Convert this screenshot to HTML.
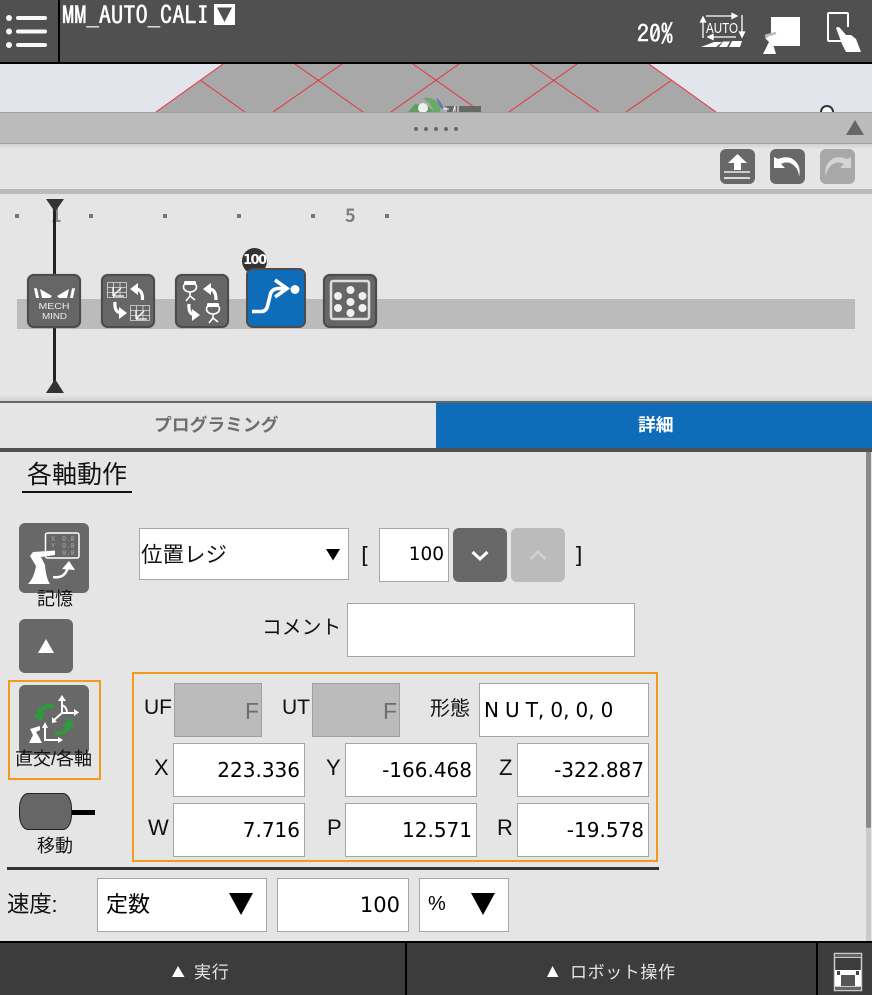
<!DOCTYPE html>
<html lang="ja"><head><meta charset="utf-8"><title>MM_AUTO_CALI</title>
<style>
html,body{margin:0;padding:0}
body{width:872px;height:995px;position:relative;overflow:hidden;background:#e5e5e5;font-family:"Liberation Sans","Noto Sans CJK JP",sans-serif;color:#111}
.a{position:absolute;box-sizing:border-box}
.t{position:absolute;white-space:nowrap;line-height:1}
.ipa{font-family:"IPAGothic","Noto Sans CJK JP",sans-serif;-webkit-text-stroke:.45px #fff}
.f{position:absolute;box-sizing:border-box;background:#fff;border:1px solid #a5a5a5;font-family:"DejaVu Sans","Noto Sans CJK JP",sans-serif;font-size:20px;text-align:right;padding-right:4px;height:54px;line-height:52px;color:#000}
.g{background:#bbb;border:1.5px solid #a0a0a0;color:#6e6e6e;font-family:"Liberation Sans",sans-serif;font-size:23px;padding-right:2px;line-height:54px}
.b{position:absolute;background:#686868;border-radius:6px}
.p{position:absolute;width:54px;height:54px;top:274px;background:#666;border:2px solid #4c4c4c;border-radius:7px;box-sizing:border-box;box-shadow:0 0 1px #777}
svg{position:absolute;left:0;top:0;overflow:visible}
</style></head><body>

<!-- header -->
<div class="a" style="left:0;top:0;width:872px;height:62px;background:#505050"></div>
<div class="a" style="left:0;top:62px;width:872px;height:2px;background:#000"></div>
<div class="a" style="left:58px;top:0;width:2px;height:62px;background:#000"></div>
<svg width="60" height="62"><g fill="#f8f8f8"><circle cx="9" cy="18" r="3"/><circle cx="9" cy="31.500" r="3"/><circle cx="9" cy="45" r="3"/><rect x="16" y="16" width="31" height="4" rx="2"/><rect x="16" y="29.500" width="31" height="4" rx="2"/><rect x="16" y="43" width="31" height="4" rx="2"/></g></svg>
<div class="t ipa" style="left:62px;top:3px;font-size:24.500px;color:#fff">MM_AUTO_CALI</div>
<div class="a" style="left:214px;top:4px;width:21px;height:21px;background:#fff"></div>
<svg width="240" height="30"><path d="M217 7.500H232L224.500 22Z" fill="#505050"/></svg>
<div class="t ipa" style="left:637px;top:21px;font-size:24px;color:#fff">20%</div>

<svg width="872" height="62">
 <!-- AUTO -->
 <g stroke="#fff" stroke-width="1.300" fill="#fff">
  <path d="M703 19V38M700.500 22L703 17L705.500 22Z"/>
  <path d="M706 16H735M732 13.500L737 16L732 18.500Z"/>
  <path d="M742 15V34M739.500 32L742 37L744.500 32Z"/>
  <path d="M711 37H736M713 34.500L708 37L713 39.500Z"/>
 </g>
 <text x="706" y="33" fill="#fff" font-family="Liberation Sans" font-size="15" textLength="32" lengthAdjust="spacingAndGlyphs">AUTO</text>
 <path d="M701 47L714 42H722L716 47ZM719 47L723 41.500H730L727 47ZM729 47L732 41H742L740 47Z" fill="#fff"/>
 <!-- robot+square -->
 <rect x="771" y="17" width="29" height="29" fill="#fff"/>
 <path d="M763 54L767 46L769 42L765 38L774 34L777 37L771 39L773 44L776 54Z" fill="#fff"/>
 <path d="M765 36L776 33" stroke="#bbb" stroke-width="2.500"/>
 <!-- tablet hand -->
 <path d="M848 41H829Q828 41 828 40V14Q828 13 829 13H847Q848 13 848 14V27" fill="none" stroke="#fff" stroke-width="2"/>
 <path d="M836 28Q838 26 840 28L846 35L851 35L856 39L861 52L846 52L842 44Z" fill="#fff"/>
</svg>

<!-- 3D view -->
<svg width="872" height="112" style="top:0">
 <rect x="0" y="64" width="872" height="48" fill="#e2e6ec"/>
 <path d="M223 64H649L716 112H156Z" fill="#a8a8a8"/>
 <g stroke="#e8303a" stroke-width="1" fill="none">
  <path d="M223 64L156 112M200 80L245 112M295 64L363 112M342 64L273 112M413 64L481 112M459 64L391 112M530 64L599 112M577 64L509 112M649 64L716 112M672 80L626 112"/>
 </g>
 <rect x="445" y="106" width="36" height="6" fill="#686868"/>
 <path d="M408 112L415 104L428 106L434 112Z" fill="#5e9e62"/>
 <path d="M423 98Q434 96 441 106L440 112H434L430 104Z" fill="#6aa86c"/>
 <path d="M436 98Q441 100 444 110L441 108Z" fill="#6a70c0"/>
 <circle cx="423" cy="108" r="5" fill="#f0f0f0"/>
 <path d="M446 112V107M443 109H449M453 112L455 106V112M458 106V112" stroke="#fff" stroke-width="1"/>
 <path d="M821 112A6 6 0 1 1 833 112" fill="#fff" stroke="#333" stroke-width="2"/>
</svg>

<!-- bar -->
<div class="a" style="left:0;top:112px;width:872px;height:32px;background:#bbb;border-top:1px solid #a2a2a2;border-bottom:1px solid #a2a2a2"></div>
<div class="a" style="left:0;top:144px;width:872px;height:5px;background:linear-gradient(#d2d2d2,#e5e5e5)"></div>
<svg width="872" height="145"><g fill="#666"><circle cx="416" cy="129" r="2"/><circle cx="426" cy="129" r="2"/><circle cx="436" cy="129" r="2"/><circle cx="446" cy="129" r="2"/><circle cx="456" cy="129" r="2"/><path d="M846 135L855 120L864 135Z"/></g></svg>

<!-- toolbar buttons -->
<div class="b" style="left:720px;top:149px;width:35px;height:35px"></div>
<div class="b" style="left:770px;top:149px;width:35px;height:35px"></div>
<div class="b" style="left:820px;top:149px;width:35px;height:35px;background:#a8a8a8"></div>
<svg width="872" height="190">
 <path d="M737.500 154L747 163H741V170H734V163H728Z" fill="#fff"/>
 <path d="M724 172H750" stroke="#ccc" stroke-width="2"/><path d="M724 178H750" stroke="#fff" stroke-width="1.500"/>
 <path d="M774 158V169H785L781 165Q790 160 797 170Q799 174 799 178Q802 165 791 159Q785 157 778 160Z" fill="#fff" transform="translate(0,-1)"/>
 <path d="M851 158V169H840L844 165Q835 160 828 170Q826 174 826 178Q823 165 834 159Q840 157 847 160Z" fill="#d4d4d4" transform="translate(0,-1)"/>
</svg>
<div class="a" style="left:0;top:189px;width:872px;height:5px;background:#bbb"></div>

<!-- timeline -->
<div class="a" style="left:17px;top:299px;width:838px;height:30px;background:#bbb"></div>
<div class="t" style="left:51px;top:206px;font-size:18px;font-weight:bold;font-family:'Noto Sans CJK JP',sans-serif;color:#888">1</div>
<div class="t" style="left:345px;top:206px;font-size:18px;font-weight:bold;font-family:'Noto Sans CJK JP',sans-serif;color:#808080">5</div>
<svg width="872" height="400">
 <g fill="#777"><rect x="15" y="214" width="4" height="4"/><rect x="89" y="214" width="4" height="4"/><rect x="163" y="214" width="4" height="4"/><rect x="237" y="214" width="4" height="4"/><rect x="311" y="214" width="4" height="4"/><rect x="385" y="214" width="4" height="4"/></g>
 <rect x="53" y="205" width="3" height="180" fill="#222"/>
 <path d="M46 199H64L55 212Z" fill="#333"/>
 <path d="M46 393H64L55 379Z" fill="#333"/>
</svg>
<div class="p" style="left:27px"></div>
<div class="p" style="left:101px"></div>
<div class="p" style="left:175px"></div>
<div class="a" style="left:242px;top:248px;width:25px;height:26px;border-radius:50%;background:#333"></div>
<div class="t" style="left:243px;top:253px;font:bold 13px 'DejaVu Sans',sans-serif;color:#fff;letter-spacing:-1.500px">100</div>
<div class="a" style="left:246px;top:268px;width:60px;height:60px;background:#0f6cb8;border:2px solid #4c4c4c;border-radius:7px"></div>
<div class="p" style="left:323px"></div>
<svg width="872" height="400">
 <!-- mech mind -->
 <path d="M34 288L37 288.500L39 298L36 298ZM40 289L52 296L50 298H42ZM75 288L72 288.500L70 298L73 298ZM69 289L57 296L59 298H67Z" fill="#fff"/>
 <text x="38.500" y="309" fill="#eee" font-family="Liberation Sans" font-size="8.500" textLength="31" lengthAdjust="spacingAndGlyphs">MECH</text>
 <text x="42" y="319" fill="#eee" font-family="Liberation Sans" font-size="8.500" textLength="25" lengthAdjust="spacingAndGlyphs">MIND</text>
 <!-- frame swap -->
 <g fill="none" stroke="#ddd" stroke-width=".8"><path d="M107.500 282.500H126.500V297.500H107.500ZM107.500 287.500H126.500M107.500 292.500H126.500M113.500 282.500V297.500M120 282.500V297.500"/><path d="M130.500 305.500H149.500V320.500H130.500ZM130.500 310.500H149.500M130.500 315.500H149.500M136.500 305.500V320.500M143 305.500V320.500"/></g>
 <path d="M113 296L121 288M113 296H124M113 296V287M136 319L144 311M136 319H147M136 319V310" stroke="#fff" stroke-width="1.300" fill="none"/>
 <g fill="none" stroke="#fff" stroke-width="3.200"><path d="M135 289Q143 289 142.500 300"/><path d="M115 302Q114 313 122 313"/><path d="M209 289Q216 289 216 300"/><path d="M189 304Q188 315 196 315"/></g>
 <path d="M130 289L138 283V295ZM127 313L119 307V319ZM203 289L211 283V295ZM200 315L192 309V321Z" fill="#fff"/>
 <!-- robot swap -->
 <g fill="none" stroke="#fff" stroke-width="1.600">
  <ellipse cx="190" cy="287" rx="6.500" ry="5"/>
  <ellipse cx="213" cy="309" rx="6.500" ry="5"/>
  <path d="M190 292V296M190 296L186 301M190 296L195 300M213 314V318M213 318L209 323M213 318L218 322"/>
 </g>
 <rect x="184" y="281" width="12" height="4" rx="1.500" fill="#fff"/><rect x="207" y="303" width="12" height="4" rx="1.500" fill="#fff"/>
 <!-- blue -->
 <path d="M252 311.500H262Q267 311 268 304L270 296Q271 288.500 279 288.500H287" fill="none" stroke="#fff" stroke-width="3.600"/>
 <path d="M275 280L287 288.500L275 297" fill="none" stroke="#fff" stroke-width="3.600"/>
 <circle cx="295" cy="289.500" r="4.500" fill="#fff"/>
 <!-- grid -->
 <rect x="331" y="281" width="38" height="38" rx="2" fill="none" stroke="#ddd" stroke-width="2.500"/>
 <g fill="#f0f0f0"><circle cx="350.500" cy="290" r="4"/><circle cx="350.500" cy="302" r="4"/><circle cx="350.500" cy="313" r="4"/><circle cx="338" cy="296" r="4"/><circle cx="362.500" cy="296" r="4"/><circle cx="338" cy="308" r="4"/><circle cx="362.500" cy="308" r="4"/></g>
</svg>

<div class="a" style="left:0;top:395px;width:872px;height:6px;background:linear-gradient(#e5e5e5,#d0d0d0)"></div>
<div class="a" style="left:0;top:401px;width:872px;height:2px;background:#666"></div>

<!-- tabs -->
<div class="a" style="left:436px;top:403px;width:436px;height:45px;background:#0f6cb8"></div>
<div class="t" style="left:154px;top:417px;font-size:17.800px;font-weight:bold;color:#6e6e6e">プログラミング</div>
<div class="t" style="left:638px;top:417px;font-size:17.800px;font-weight:bold;color:#fff">詳細</div>
<div class="a" style="left:0;top:448px;width:872px;height:4px;background:#505050"></div>

<!-- title -->
<div class="t" style="left:27px;top:463px;font-size:25px;color:#111">各軸動作</div>
<div class="a" style="left:22px;top:491px;width:110px;height:2px;background:#111"></div>

<!-- scrollbar -->
<div class="a" style="left:866px;top:452px;width:5px;height:490px;background:#cacaca"></div>
<div class="a" style="left:866px;top:452px;width:5px;height:376px;background:#8a8a8a;border-radius:0 0 2px 2px"></div>

<!-- left controls -->
<div class="b" style="left:19px;top:523px;width:70px;height:70px"></div>
<svg width="120" height="600">
 <rect x="45.500" y="533" width="33.500" height="25" rx="2" fill="#666" stroke="#fff" stroke-width="1.500"/>
 <g fill="#aaa" font-family="Liberation Mono" font-size="7"><text x="51" y="541">X</text><text x="51" y="548">Y</text><text x="62" y="541">0.0</text><text x="62" y="548">0.0</text><text x="62" y="555">0.0</text></g>
 <path d="M28 584Q34 578 36 566L30 556L33 552L55 550.500V555L41 557L45 565Q46 578 50 584Z" fill="#fff"/>
 <path d="M53 577Q65 579 68 567" fill="none" stroke="#fff" stroke-width="2.500"/>
 <path d="M62 569L69 561L75 570Z" fill="#fff"/>
</svg>
<div class="t" style="left:37px;top:590px;font-size:18px;color:#111">記憶</div>
<div class="b" style="left:19px;top:619px;width:54px;height:54px"></div>
<svg width="120" height="680"><path d="M38 653L46 639L54 653Z" fill="#fff"/></svg>

<div class="a" style="left:8px;top:680px;width:93px;height:100px;border:2px solid #f39a1e"></div>
<div class="b" style="left:19px;top:685px;width:70px;height:70px"></div>
<svg width="120" height="780">
 <g fill="none" stroke="#fff" stroke-width="2">
  <path d="M62 699V713M62 713H75M62 713L54 720M62 705Q67 707 67 713"/>
  <path d="M45 726V740H59"/>
 </g>
 <path d="M58 701L62 695L66 701ZM74 709L79 712.500L74 716ZM52 717L52 723L57 722ZM42 728L45 722L48 728ZM58 737L63 740L58 743Z" fill="#fff"/>
 <path d="M29 743L33 735L30 729L40 726V730L36 732L39 737L42 743Z" fill="#fff"/>
 <path d="M54 707Q44 703 38 714" fill="none" stroke="#2c9b3c" stroke-width="4"/>
 <path d="M33 715L45 712L41 722Z" fill="#2c9b3c"/>
 <path d="M55 733Q67 734 70 724" fill="none" stroke="#2c9b3c" stroke-width="4"/>
 <path d="M63 727L69 717L75 727Z" fill="#2c9b3c"/>
</svg>
<div class="t" style="left:15px;top:750px;font-size:18px;color:#111">直交/各軸</div>

<div class="a" style="left:19px;top:793px;width:53px;height:37px;background:#666;border:1px solid #222;border-radius:9px/15px"></div>
<div class="a" style="left:72px;top:810px;width:23px;height:5px;background:#000"></div>
<div class="t" style="left:37px;top:837px;font-size:18px;color:#111">移動</div>

<!-- form -->
<div class="a" style="left:139px;top:528px;width:210px;height:52px;background:#fff;border:1px solid #a5a5a5"></div>
<div class="t" style="left:141px;top:545px;font-size:21.500px;color:#111">位置レジ</div>
<svg width="350" height="580"><path d="M326 549H340L333 560.500Z" fill="#000"/></svg>
<div class="t" style="left:361px;top:544px;font:22px 'DejaVu Sans',sans-serif">[</div>
<div class="f" style="left:379px;top:528px;width:70px;font-size:18.500px">100</div>
<div class="b" style="left:453px;top:528px;width:54px;height:54px"></div>
<div class="b" style="left:511px;top:528px;width:54px;height:54px;background:#bbb"></div>
<svg width="600" height="600"><path d="M472.500 552L480 559L487.500 552" fill="none" stroke="#fff" stroke-width="3"/><path d="M530.500 559L538 552L545.500 559" fill="none" stroke="#d0d0d0" stroke-width="3"/></svg>
<div class="t" style="left:574px;top:544px;font:22px 'DejaVu Sans',sans-serif">]</div>

<div class="t" style="left:262px;top:619px;font-size:19.800px;color:#111">コメント</div>
<div class="a" style="left:347px;top:603px;width:288px;height:54px;background:#fff;border:1px solid #a5a5a5"></div>

<div class="a" style="left:132px;top:672px;width:526px;height:190px;border:2px solid #f39a1e"></div>
<div class="t" style="left:144px;top:697px;font-size:21px">UF</div>
<div class="f g" style="left:174px;top:683px;width:88px">F</div>
<div class="t" style="left:282px;top:697px;font-size:21px">UT</div>
<div class="f g" style="left:312px;top:683px;width:88px">F</div>
<div class="t" style="left:430px;top:699px;font-size:20px">形態</div>
<div class="f" style="left:479px;top:683px;width:170px;text-align:left;padding-left:4px;font-size:20px;font-family:'DejaVu Sans',sans-serif;word-spacing:-.3px">N U T, 0, 0, 0</div>

<div class="t" style="left:154px;top:757px;font-size:22px">X</div>
<div class="f" style="left:173px;top:743px;width:132px">223.336</div>
<div class="t" style="left:326px;top:757px;font-size:22px">Y</div>
<div class="f" style="left:345px;top:743px;width:132px">-166.468</div>
<div class="t" style="left:499px;top:757px;font-size:22px">Z</div>
<div class="f" style="left:517px;top:743px;width:132px">-322.887</div>

<div class="t" style="left:148px;top:817px;font-size:22px">W</div>
<div class="f" style="left:173px;top:803px;width:132px">7.716</div>
<div class="t" style="left:327px;top:817px;font-size:22px">P</div>
<div class="f" style="left:345px;top:803px;width:132px">12.571</div>
<div class="t" style="left:497px;top:817px;font-size:22px">R</div>
<div class="f" style="left:517px;top:803px;width:132px">-19.578</div>

<div class="a" style="left:7px;top:867px;width:652px;height:3px;background:#333"></div>

<div class="t" style="left:7px;top:894px;font-size:22.500px;color:#111;letter-spacing:-.3px">速度:</div>
<div class="a" style="left:97px;top:878px;width:170px;height:54px;background:#fff;border:1px solid #a5a5a5"></div>
<div class="t" style="left:106px;top:894px;font-size:22px;color:#000">定数</div>
<div class="f" style="left:277px;top:878px;width:132px;padding-right:8px;font-size:21px">100</div>
<div class="a" style="left:419px;top:878px;width:90px;height:54px;background:#fff;border:1px solid #a5a5a5"></div>
<div class="t" style="left:428px;top:894px;font-size:20px;color:#000">%</div>
<svg width="520" height="940"><path d="M229 893H253L241 915Z" fill="#000"/><path d="M471 893H495L483 915Z" fill="#000"/></svg>

<!-- footer -->
<div class="a" style="left:0;top:941px;width:872px;height:2px;background:#000"></div>
<div class="a" style="left:0;top:943px;width:872px;height:52px;background:#3c3c3c"></div>
<div class="a" style="left:405px;top:943px;width:2px;height:52px;background:#000"></div>
<div class="a" style="left:816px;top:943px;width:2px;height:52px;background:#000"></div>
<svg width="872" height="995">
 <path d="M172 977L178 966L184.500 977ZM547 977L552.500 966L558.500 977Z" fill="#fff"/>
 <rect x="834.500" y="953.500" width="27" height="37" fill="none" stroke="#ccc" stroke-width="1.500"/>
 <rect x="834.500" y="953.500" width="27" height="4" fill="#666" stroke="#ccc"/>
 <rect x="835" y="970" width="26" height="17" fill="#fff"/>
 <rect x="841" y="975" width="14" height="11" fill="#555"/>
 <rect x="837" y="971" width="3" height="4" fill="#444"/><rect x="856" y="971" width="3" height="4" fill="#444"/>
 <rect x="834.500" y="986.500" width="27" height="4" fill="#666" stroke="#ccc"/>
</svg>
<div class="t" style="left:194px;top:964px;font-size:17px;color:#e4e4e4;letter-spacing:.8px">実行</div>
<div class="t" style="left:570px;top:964px;font-size:17px;color:#e4e4e4;letter-spacing:.6px">ロボット操作</div>

</body></html>
